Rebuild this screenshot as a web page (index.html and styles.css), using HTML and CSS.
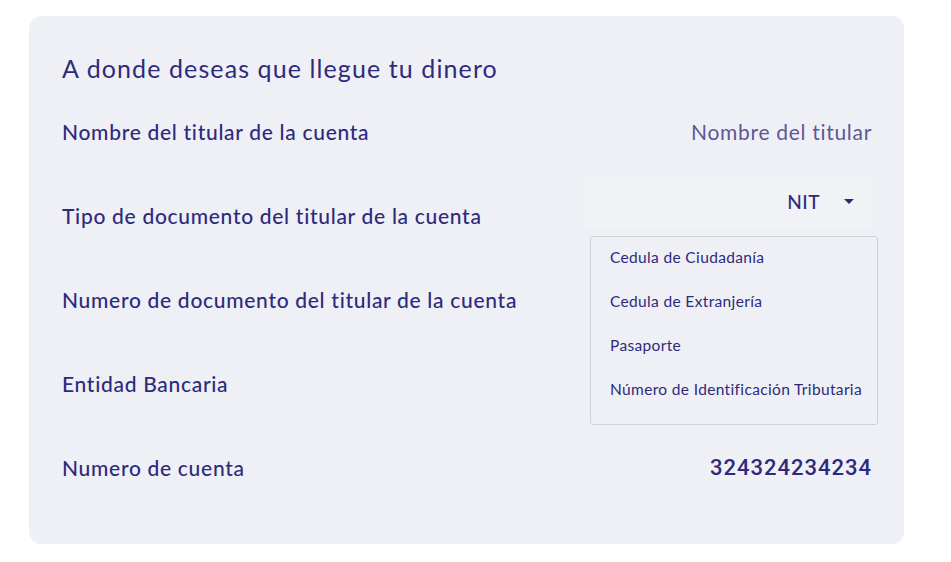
FILE: index.html
```html
<!DOCTYPE html>
<html lang="es">
<head>
<meta charset="utf-8">
<title>Cuenta</title>
<link rel="stylesheet" href="styles.css">
</head>
<body>
<section class="card">
  <h2 class="title">A donde deseas que llegue tu dinero</h2>
  <div class="row">
    <span class="label">Nombre del titular de la cuenta</span>
    <span class="value placeholder">Nombre del titular</span>
  </div>
  <div class="row">
    <span class="label">Tipo de documento del titular de la cuenta</span>
    <div class="select-wrap">
      <div class="select">
        <span class="select-value">NIT</span>
        <svg class="caret" width="10" height="5" viewBox="0 0 10 5"><path d="M0 0h10L5 5z" fill="#2d2a7e"/></svg>
      </div>
      <ul class="menu">
        <li>Cedula de Ciudadanía</li>
        <li>Cedula de Extranjería</li>
        <li>Pasaporte</li>
        <li>Número de Identificación Tributaria</li>
      </ul>
    </div>
  </div>
  <div class="row">
    <span class="label">Numero de documento del titular de la cuenta</span>
  </div>
  <div class="row">
    <span class="label">Entidad Bancaria</span>
  </div>
  <div class="row">
    <span class="label">Numero de cuenta</span>
    <span class="value number">324324234234</span>
  </div>
</section>
</body>
</html>
```

FILE: styles.css
```css
html, body {
  margin: 0;
  padding: 0;
  background: #ffffff;
}
body {
  font-family: Lato, "Open Sans", sans-serif;
  color: #2d2a7e;
  padding: 16px 0 0 29px;
}
.card {
  width: 875px;
  height: 528px;
  box-sizing: border-box;
  background: #eff0f5;
  border-radius: 12px;
  padding: 37px 32px 0 33px;
}
.title {
  margin: 0 0 6px;
  font-size: 25px;
  letter-spacing: 1.1px;
  line-height: 30px;
  font-weight: 400;
}
.row {
  height: 84px;
  display: flex;
  align-items: center;
  justify-content: space-between;
}
.label {
  font-size: 21px;
  letter-spacing: 0.7px;
  font-weight: 500;
}
.value {
  font-size: 21px;
  letter-spacing: 0.7px;
}
.placeholder {
  color: #5b5899;
}
.number {
  font-family: Roboto, "Liberation Sans", sans-serif;
  font-size: 22px;
  letter-spacing: 1px;
  font-weight: 500;
}
.select-wrap {
  align-self: flex-start;
  margin-top: 2px;
  position: relative;
}
.select {
  width: 288px;
  height: 53px;
  box-sizing: border-box;
  background: #f1f2f6;
  border-radius: 4px;
  display: flex;
  align-items: center;
  justify-content: flex-end;
  padding-right: 18px;
}
.select-value {
  font-size: 19px;
  letter-spacing: 0.5px;
  font-weight: 500;
  margin-right: 24px;
}
.caret {
  display: block;
}
.menu {
  position: absolute;
  left: 6px;
  top: 61px;
  width: 288px;
  height: 189px;
  box-sizing: border-box;
  margin: 0;
  padding: 0;
  list-style: none;
  border: 1px solid #cfd0d6;
  border-radius: 3px;
  background: #eff0f5;
}
.menu li {
  height: 44px;
  line-height: 41px;
  padding-left: 19px;
  font-size: 15.5px;
  letter-spacing: 0.35px;
}
```
